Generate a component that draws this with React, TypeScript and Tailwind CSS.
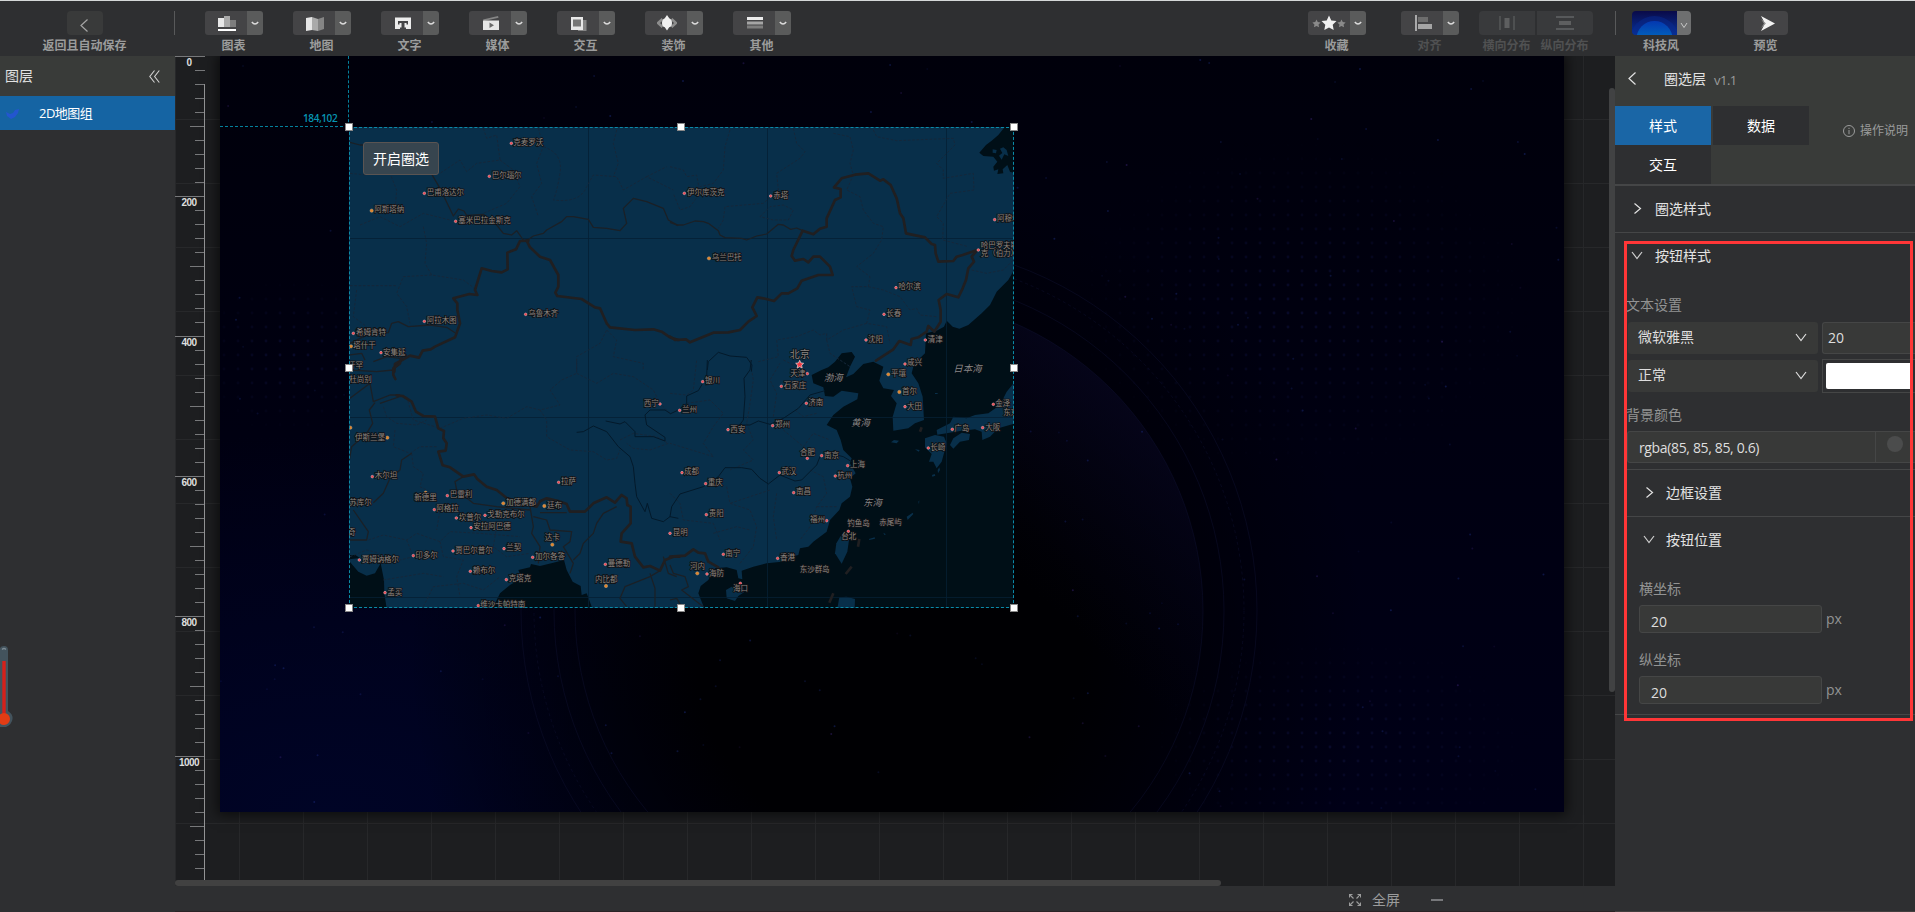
import React from "react";

const SANS = "font-['Open_Sans','Noto_Sans_CJK_SC',sans-serif]";

/* ---------- small glyphs ---------- */

function Chevron({ dir, className = "" }: { dir: "left" | "right" | "down"; className?: string }) {
  const d = { left: "M8.5 0.5 L2 6.5 L8.5 12.5", right: "M1.5 1.5 L7.5 6.5 L1.5 11.5", down: "M1 3 L6 9.5 L11 3" }[dir];
  return (
    <svg width="12" height="13" viewBox="0 0 12 13" className={className}>
      <path d={d} fill="none" stroke="currentColor" strokeWidth="1.2" />
    </svg>
  );
}

const icons: Record<string, React.ReactNode> = {
  chart: (
    <>
      <path d="M1 3h6v9H1z" fill="#e8e8e8" />
      <path d="M7 1h6v11H7z" fill="#a9a9a9" />
      <path d="M13 5h6v7h-6z" fill="#7d7d7d" />
      <path d="M1 14h18v2H1z" fill="#fff" />
    </>
  ),
  map: (
    <>
      <path d="M1 3l6-1v13l-6 1z" fill="#e6e6e6" />
      <path d="M7 2l6 2v12l-6-1z" fill="#aaa" />
      <path d="M13 4l6-2v12l-6 2z" fill="#858585" />
    </>
  ),
  text: (
    <>
      <path d="M2 2.500h16v11.500H2z" fill="#ececec" />
      <path d="M5 6h10v3.500h-1.500V8H11.500v4.500H13V14H7v-1.500h1.500V8H6.500v1.500H5z" fill="#444446" />
    </>
  ),
  media: (
    <>
      <path d="M2 4.500L17 1l.5 1.800L3 6z" fill="#858585" />
      <path d="M2 5.500h16V15H2z" fill="#e6e6e6" />
      <path d="M8.500 7.500l4.500 2.700-4.500 2.800z" fill="#6a6a6a" />
    </>
  ),
  interact: (
    <>
      <path d="M14 5h3.500v11H9v-2z" fill="#858585" />
      <path d="M2 2h12v13H2z" fill="#e8e8e8" />
      <path d="M4 4.500h8v7H4z" fill="#777" />
    </>
  ),
  decor: (
    <>
      <path d="M5.500 4L1 8l4.500 4M14.500 4L19 8l-4.500 4" fill="none" stroke="#8d8d8d" strokeWidth="2.600" />
      <path d="M10 0l2.200 3.200q2.800 1 2.800 4.800t-2.800 4.300L10 15.500l-2.200-3.200Q5 11.800 5 8t2.800-4.800z" fill="#f0f0f0" />
    </>
  ),
  other: (
    <>
      <path d="M2 2h16v3H2z" fill="#ececec" />
      <path d="M2 6.500h16v3H2z" fill="#a5a5a5" />
      <path d="M2 10.500h16v3H2z" fill="#7d7d7d" />
    </>
  ),
};

function Caret() {
  return (
    <svg width="8" height="5" viewBox="0 0 8 5">
      <path d="M.8 1q3.200 4 6.400 0" fill="none" stroke="#dcdcdc" strokeWidth="1.400" />
    </svg>
  );
}

function Caption({ children, dim = false }: { children: React.ReactNode; dim?: boolean }) {
  return (
    <span className={`mt-[3px] -ml-px whitespace-nowrap text-xs leading-[16px] font-bold ${dim ? "text-[#505152]" : "text-[#9b9c9c]"}`}>
      {children}
    </span>
  );
}

function SplitTool({ label, dim, children }: { label: string; dim?: boolean; children: React.ReactNode }) {
  return (
    <div className="flex w-[58px] shrink-0 flex-col items-center">
      <div className="flex h-6 w-full overflow-hidden rounded-[3px]">
        <div className="flex flex-1 items-center justify-center bg-[#444446]">{children}</div>
        <div className="flex w-4 items-center justify-center bg-[#5a5b5b]">
          <Caret />
        </div>
      </div>
      <Caption dim={dim}>{label}</Caption>
    </div>
  );
}

const tools = [
  ["chart", "图表"],
  ["map", "地图"],
  ["text", "文字"],
  ["media", "媒体"],
  ["interact", "交互"],
  ["decor", "装饰"],
  ["other", "其他"],
];

const star = "M0-7.500L2.300-2.600 7.500-2 3.700 1.700 4.700 7 0 4.400-4.700 7-3.700 1.700-7.500-2-2.300-2.600z";

function Header() {
  return (
    <header className="flex h-14 shrink-0 border-t border-[#d5d8d8] bg-[#2e2f31] pt-[10px]">
      <div className="flex w-[174px] shrink-0 flex-col items-center pr-[4px]">
        <div className="flex h-6 w-9 items-center justify-center rounded-[4px] bg-[#393a3a]">
          <Chevron dir="left" className="mt-1 text-[#a5a5a5]" />
        </div>
        <Caption>返回且自动保存</Caption>
      </div>
      <div className="h-6 w-px bg-[#58595a]" />
      <nav className="ml-[30px] flex gap-[30px]">
        {tools.map(([icon, label]) => (
          <SplitTool key={icon} label={label}>
            <svg width="20" height="17" viewBox="0 0 20 17" className="ml-[2px]">
              {icons[icon]}
            </svg>
          </SplitTool>
        ))}
      </nav>
      <div className="ml-auto flex shrink-0 pr-[127px]">
        <SplitTool label="收藏">
          <svg width="34" height="18" viewBox="-17 -9 34 18">
            <path d={star} fill="#f0f0f0" />
            <path d={star} fill="#8a8a8a" transform="translate(-12.500 .5) scale(.55)" />
            <path d={star} fill="#8a8a8a" transform="translate(12.500 .5) scale(.55)" />
          </svg>
        </SplitTool>
        <div className="w-[35px]" />
        <SplitTool label="对齐" dim>
          <svg width="18" height="16" viewBox="0 0 18 16" className="ml-1">
            <path d="M1 0v16" stroke="#eee" strokeWidth="1.200" />
            <path d="M3 2h10v5H3z" fill="#6d6d6d" />
            <path d="M3 9h14v5H3z" fill="#a5a5a5" />
          </svg>
        </SplitTool>
        <div className="ml-5 flex w-14 flex-col items-center">
          <div className="flex h-6 w-full items-center justify-center rounded-l-[4px] bg-[#393a3c]">
            <svg width="18" height="16" viewBox="0 0 18 16">
              <path d="M2 1v14M16 1v14" stroke="#5e5f60" strokeWidth="1.200" />
              <path d="M6.500 3h5v10h-5z" fill="#5e5f60" />
            </svg>
          </div>
          <Caption dim>横向分布</Caption>
        </div>
        <div className="ml-0.5 flex w-14 flex-col items-center">
          <div className="flex h-6 w-full items-center justify-center rounded-r-[4px] bg-[#393a3c]">
            <svg width="18" height="16" viewBox="0 0 18 16">
              <path d="M0 2h18M0 14h18" stroke="#77787a" strokeWidth="1.200" />
              <path d="M3 6h12v4H3z" fill="#5e5f60" />
            </svg>
          </div>
          <Caption dim>纵向分布</Caption>
        </div>
        <div className="ml-[22px] h-6 w-px bg-[#58595a]" />
        <div className="ml-4 flex w-[59px] flex-col items-center">
          <div className="flex h-6 w-full overflow-hidden rounded-[4px]">
            <svg width="45" height="24" viewBox="0 0 45 24">
              <defs>
                <linearGradient id="thumb" x2="0" y2="1">
                  <stop offset="0" stopColor="#0a0a48" />
                  <stop offset="1" stopColor="#07339a" />
                </linearGradient>
                <linearGradient id="globe" x2="0" y2=".7">
                  <stop offset="0" stopColor="#0438b0" />
                  <stop offset="1" stopColor="#0078c0" />
                </linearGradient>
              </defs>
              <path d="M0 0h45v24H0z" fill="url(#thumb)" />
              <circle cx="22.500" cy="30" r="25" fill="#072a90" fillOpacity=".5" />
              <circle cx="22.500" cy="28" r="18" fill="url(#globe)" />
            </svg>
            <div className="flex flex-1 items-center justify-center bg-[#6e6f70]">
              <svg width="8" height="7" viewBox="0 0 8 7" className="mt-1">
                <path d="M1 1l3 4.500L7 1" fill="none" stroke="#c8c8c8" />
              </svg>
            </div>
          </div>
          <Caption>科技风</Caption>
        </div>
        <div className="ml-[53px] flex w-11 flex-col items-center">
          <div className="flex h-6 w-full items-center justify-center rounded-[4px] bg-[#444446]">
            <svg width="14" height="15" viewBox="0 0 14 15" className="ml-1">
              <path d="M0 0l14 7.500L0 15 4 7.500z" fill="#f2f2f2" />
              <path d="M0 3l5 4.500L0 12l3-4.500z" fill="#999" />
            </svg>
          </div>
          <Caption>预览</Caption>
        </div>
      </div>
    </header>
  );
}

/* ---------- layers ---------- */

function LayersPanel() {
  return (
    <aside className="relative w-[175px] shrink-0 bg-[#2e2f31]">
      <div className="flex h-10 items-center justify-between bg-[#393b39] pr-[15px] pl-[5px] text-sm text-[#e2e2e2]">
        图层
        <svg width="11" height="13" viewBox="0 0 11 13">
          <path d="M5.500 .5L.8 6.500l4.700 6M10.300.5L5.600 6.500l4.700 6" fill="none" stroke="#d2d2d2" strokeWidth="1.100" />
        </svg>
      </div>
      <div className="flex h-[34px] items-center bg-[#1564a3] pt-0.5 pl-[6px] text-[13px] tracking-[-0.5px] text-white">
        <svg width="14" height="11" viewBox="0 0 14 11" className="mr-[19px]">
          <path d="M0 3l4 2 3-1 2-3 4-1-1 4-3 4-4 2-4-3z" fill="#2356cf" />
        </svg>
        2D地图组
      </div>
      <svg width="14" height="84" viewBox="0 0 14 84" className="absolute top-[589px] left-0">
        <path d="M0 3Q1 1 4 1q4 0 4 4v61q5 3 4.500 8T6 82H0z" fill="#43535d" />
        <path d="M4 16v55" stroke="#d6201a" strokeWidth="3.400" />
        <circle cx="4" cy="74" r="6" fill="#e23c14" />
        <path d="M2 4.500q2-2 4 0" stroke="#7d8b94" strokeWidth="1.200" fill="none" />
      </svg>
    </aside>
  );
}

/* ---------- map ---------- */

// Map geometry is kept in four tiles, three units to a pixel.
const tiles = {
  nw: "translate(340 110) scale(.33333)",
  ne: "translate(670 110) scale(.33333)",
  sw: "translate(340 360) scale(.33333)",
  se: "translate(670 360) scale(.33333)",
};

type Tile = keyof typeof tiles;
// dot x, dot y, label x, label centre y, name, dot kind (r city, o capital)
type City = [number, number, number, number, string, string];

const cities: Record<Tile, City[]> = {
  nw: [
    [514, 100, 520, 98, "克麦罗沃", "r"],
    [448, 199, 455, 197, "巴尔瑙尔", "r"],
    [253, 250, 260, 247, "巴甫洛达尔", "r"],
    [95, 302, 103, 299, "阿斯塔纳", "o"],
    [347, 334, 355, 331, "塞米巴拉金斯克", "r"],
    [557, 613, 565, 610, "乌鲁木齐", "r"],
    [253, 634, 260, 631, "阿拉木图", "r"],
    [40, 670, 48, 667, "希姆肯特", "r"],
    [33, 709, 40, 707, "塔什干", "o"],
    [123, 728, 129, 726, "安集延", "r"],
    [0, 0, 24, 767, "汗罕", ""],
  ],
  ne: [
    [43, 250, 51, 247, "伊尔库茨克", "r"],
    [302, 258, 310, 255, "赤塔", "r"],
    [117, 445, 125, 442, "乌兰巴托", "o"],
    [974, 329, 981, 326, "阿穆尔", "r"],
    [925, 420, 932, 406, "哈巴罗夫斯", "r"],
    [0, 0, 932, 429, "克（伯力）", ""],
    [678, 533, 685, 530, "哈尔滨", "r"],
    [642, 613, 649, 610, "长春", "r"],
    [588, 690, 594, 688, "沈阳", "r"],
    [766, 690, 773, 688, "清津", "r"],
    [705, 762, 711, 758, "咸兴", "r"],
  ],
  sw: [
    [0, 0, 28, 59, "杜尚别", ""],
    [31, 203, 0, 0, "", "o"],
    [142, 233, 45, 231, "伊斯兰堡", "o"],
    [960, 132, 911, 129, "西宁", "r"],
    [97, 350, 104, 347, "木尔坦", "r"],
    [656, 367, 663, 364, "拉萨", "r"],
    [257, 398, 223, 413, "新德里", "o"],
    [322, 407, 329, 404, "巴雷利", "r"],
    [0, 0, 28, 427, "苏库尔", ""],
    [283, 449, 289, 446, "阿格拉", "r"],
    [490, 430, 498, 428, "加德满都", "o"],
    [613, 438, 621, 436, "廷布", "o"],
    [349, 474, 356, 471, "坎普尔", "r"],
    [435, 466, 442, 463, "戈勒克布尔", "r"],
    [393, 503, 400, 500, "安拉阿巴德", "r"],
    [0, 0, 24, 516, "奇", ""],
    [637, 554, 614, 533, "达卡", "o"],
    [58, 600, 65, 598, "贾姆讷格尔", "r"],
    [220, 587, 226, 585, "印多尔", "r"],
    [339, 573, 346, 570, "贾巴尔普尔", "r"],
    [492, 566, 499, 563, "兰契", "r"],
    [578, 592, 585, 589, "加尔各答", "r"],
    [391, 634, 398, 631, "赖布尔", "r"],
    [796, 613, 803, 610, "曼德勒", "r"],
    [798, 678, 765, 658, "内比都", "o"],
    [499, 659, 506, 656, "克塔克", "r"],
    [135, 698, 142, 696, "孟买", "r"],
    [415, 737, 421, 733, "维沙卡帕特南", "r"],
    [990, 520, 998, 517, "昆明", "r"],
  ],
  se: [
    [412, 41, 361, 39, "天津", "r"],
    [98, 65, 105, 62, "银川", "r"],
    [334, 79, 341, 77, "石家庄", "r"],
    [409, 130, 415, 127, "济南", "r"],
    [29, 151, 36, 148, "兰州", "r"],
    [174, 209, 181, 207, "西安", "r"],
    [308, 197, 315, 194, "郑州", "r"],
    [655, 43, 663, 41, "平壤", "o"],
    [688, 96, 696, 94, "首尔", "o"],
    [705, 140, 711, 138, "大田", "r"],
    [970, 133, 976, 131, "金泽", "r"],
    [0, 0, 1000, 158, "东京", ""],
    [847, 208, 853, 204, "广岛", "r"],
    [938, 203, 946, 201, "大阪", "r"],
    [775, 264, 781, 262, "长崎", "r"],
    [412, 295, 390, 276, "合肥", "r"],
    [455, 287, 462, 285, "南京", "r"],
    [533, 317, 540, 314, "上海", "r"],
    [496, 348, 502, 346, "杭州", "r"],
    [36, 338, 42, 335, "成都", "r"],
    [107, 371, 113, 368, "重庆", "r"],
    [328, 338, 334, 335, "武汉", "r"],
    [371, 398, 378, 395, "南昌", "r"],
    [109, 464, 116, 461, "贵阳", "r"],
    [470, 482, 420, 479, "福州", "r"],
    [0, 0, 532, 490, "钓鱼岛", ""],
    [0, 0, 628, 486, "赤尾屿", ""],
    [535, 514, 514, 528, "台北", "r"],
    [160, 583, 166, 580, "南宁", "r"],
    [323, 595, 330, 593, "香港", "r"],
    [82, 640, 60, 619, "河内", "o"],
    [111, 642, 117, 639, "海防", "r"],
    [211, 670, 189, 684, "海口", "r"],
    [0, 0, 389, 627, "东沙群岛", ""],
  ],
};

const seas: [number, number, string][] = [
  [461, 53, "渤海"],
  [543, 187, "黄海"],
  [579, 427, "东海"],
  [850, 27, "日本海"],
];

function CityLabels({ tile }: { tile: Tile }) {
  return (
    <g transform={tiles[tile]}>
      {cities[tile].map(([x, y, lx, ly, name, kind], i) => (
        <g key={i}>
          {kind === "r" && <circle cx={x} cy={y} r="4" fill="#f04450" stroke="#e6b4b8" strokeWidth="1.600" />}
          {kind === "o" && <circle cx={x} cy={y} r="5" fill="#e58528" stroke="#b9a284" strokeWidth="1.500" />}
          {name && (
            <text x={lx} y={ly + 8} fontSize="22.500" fill="#8b847f" stroke="#101216" strokeWidth="5" paintOrder="stroke">
              {name}
            </text>
          )}
        </g>
      ))}
    </g>
  );
}

function MapView() {
  return (
    <svg width="665" height="481" viewBox="349 127 665 481" className="block bg-[#082f4a]">
      {/* sea */}
      <g transform={tiles.se} fill="#000f17">
        <path d="M1035-275L1015-240 980-205 960-165 935-140 895-105 868-94 848-100 840-108 830-118 822-100 800-88 768-80 765-20 732 12 725 40 745 70 758 110 762 180 735 190 715 205 670 212 668 170 680 130 663 108 672 90 640 85 628 62 640 20 610 5 580 12 550 42 528 52 540 20 555-10 545-24 515-20 495 5 475 22 455 30 425 45 430 70 460 82 465 108 490 110 515 92 565 100 562 118 520 140 490 165 470 195 500 210 512 240 520 270 545 295 540 310 557 340 540 355 547 380 540 410 515 430 508 450 480 480 470 515 430 545 415 560 390 565 385 585 345 595 335 605 290 610 250 620 215 632 217 658 205 655 200 630 170 622 135 625 115 660 92 678 85 700 103 745H1035z" />
        <g fill="#082f4a">
          <path d="M1035 65L1010 95 990 135 955 160 915 165 890 175 850 170 840 190 800 210 802 224 830 220 870 213 915 208 935 215 937 240 960 230 985 205 1035 190z" />
          <path d="M850 235L875 218 900 222 897 240 870 245 850 266 840 255z" />
          <path d="M765 235L795 225 822 230 830 250 815 305 800 325 790 305 777 305 785 282 765 262z" />
          <path d="M512 528L537 540 532 575 515 611 495 580 499 550z" />
          <path d="M168 690L185 680 220 683 222 697 205 708 195 723 170 715z" />
          <path d="M508 712L530 710 555 717 554 745H502z" />
          <path d="M663 247L672 240 687 242 680 250zM786 345l8-3 2 5-9 3zM803 330l5-8 2 8-6 10zM745 425l3-4-1 12zM710 470l18-12 2 4-17 18zM597 537l17-5 1 4-17 4zM640 518l8 5-5 2zM735 268l14 2-3 5zM795 99h8v3h-8z" />
        </g>
      </g>
      <g transform={tiles.ne} fill="#000f17">
        <path d="M1005 50L985 75 965 92 948 105 928 128 940 138 970 140 982 155 970 170 972 182 985 178 982 192 1000 190 998 178 1012 165 1020 185 1035 190V50z" />
        <path d="M968 118l12 2-2 10-10-2zM990 116l10-4 10 8 5 18-12-5-8 16-8-12 10-8z" fill="#082f4a" />
      </g>
      <g transform={tiles.sw} fill="#000f17">
        <path d="M25 600L35 612 55 635 80 647 105 640 122 610 132 660 133 700 140 745H25zM28 585h18l14 9-32 4z" />
        <path d="M458 745L480 700 510 675 545 655 535 630 570 622 573 612 600 618 640 608 672 600 680 630 698 665 722 678 725 705 740 700 757 745z" />
      </g>

      {/* graticule */}
      <path
        d="M349 238.500h665M349 417.500h665M349 597.500h665M588.500 127v481M767.500 127v481M946.500 127v481"
        stroke="#051f33"
        strokeWidth="1"
        strokeOpacity=".8"
      />

      {/* province and district boundaries */}
      <g fill="none" stroke="#15273a" strokeWidth="3" strokeDasharray="8 5">
        <g transform={tiles.nw}>
          <path d="M430 55L440 85 470 75 480 150 410 160 380 185 360 150 300 190 M480 150L520 180 540 230 500 280 430 310 M595 55L610 110 590 160 605 220 575 260 595 320 M610 110Q670 130 660 190T640 270Q720 280 740 230L760 195 830 200 850 240 920 200 1000 240 M920 200L980 170 M830 60L820 100 835 160 820 200" />
          <path d="M30 190L80 195 110 160 150 190 170 240 165 300 M60 345L120 320 180 350 250 310 330 330 M250 350L260 400 255 460 275 495 370 510 410 540 M275 495L190 500 170 550 200 590 210 640 M30 527H170 M50 540L40 620 80 650 M710 780L710 740 780 700 800 660 M800 660L830 690 820 740 910 760 910 780" />
        </g>
        <g transform={tiles.ne}>
          <path d="M180 60L165 110 160 180 130 220 90 230 M0 170L40 180 50 200 80 195 90 250 60 290 30 300 10 250 M370 55L380 100 405 125 390 145 320 190 325 240 280 280 165 290 160 330 145 355 M270 320L300 290 340 285 370 300 355 330 310 330 270 320" />
          <path d="M490 70L540 80 550 120 540 160 550 195 530 240 570 260 580 300 610 340 640 350 635 390 610 430 560 470 600 500 595 530 545 530 560 590 600 600 590 640 650 650 660 700 M595 530L640 540 690 560 720 600 740 595 750 615 800 620 M610 60L620 80 680 92 850 85 855 105 800 160 820 180 820 205 910 190 912 240 840 250 800 320 820 340 818 390 895 410 M905 480L950 490 1000 480 1030 450 M590 640L520 660 470 690 470 670 450 675 430 660 380 680 320 690 325 740 265 755 M470 690L480 730 540 770" />
        </g>
        <g transform={tiles.sw}>
          <path d="M200 110L220 180 300 205 370 175 440 165 500 175 560 140 600 150 660 135 630 90 665 60 710 40 710 0 M710 40L770 70 820 40 880 50 940 90 960 130 990 160 M600 150L620 180 620 230 690 270 760 275 800 300 830 295 840 270 M840 240L880 220 950 230 985 250 930 270 880 265 860 250" />
          <path d="M130 140L140 170 170 190 230 195 260 180 M165 210L160 260 210 280 240 260 290 260 M215 280L220 320 250 340 240 380 280 400 300 450 290 510 M85 540L130 525 200 540 230 520 300 545 330 515 420 520 540 530 M200 540L220 590 180 600 M300 545L310 590 370 600 350 650 360 710 M250 740L280 680 370 670 430 690 480 650 M470 500L460 560 500 590 570 580 M30 590L80 570 120 580 M130 660L250 640 310 650" />
        </g>
        <g transform={tiles.se}>
          <path d="M0 100L50 105 70 90 80 0 M50 130L120 120 160 160 130 200 100 250 130 290 0 250 M240 0L250 60 240 130 230 190 M310 170L320 100 300 60 330 10 M230 190L250 240 220 270 250 300 180 330 M340 0L380 20 400 0 M375 150L400 170 440 160 M340 210L400 260 430 220 480 240 M420 330L460 350 470 400 440 440 420 500 390 540 M440 440L500 440 M320 400L310 470 320 540 M0 400L30 430 40 480 130 490 150 540 M170 380L180 430 240 410 300 390 M180 430L240 450 260 500 250 560 210 610 M130 520L200 500 240 510" />
        </g>
      </g>

      {/* rivers and secondary borders */}
      <g fill="none" stroke="#1b2026" strokeWidth="3.800" strokeLinejoin="round">
        <g transform={tiles.nw}>
          <path d="M30 97L60 105 85 105 M265 175L300 235 340 318 355 297 372 303 380 316 430 313 470 345 490 370 515 375 530 362 550 390 M560 392L580 378 610 370 620 360 665 335 680 320 700 320 745 328 760 352 800 355 840 362 860 340 850 295 880 265 920 275 970 295 985 330 1015 347" />
          <path d="M30 700L90 670 145 668 155 640 175 635 205 650 270 645 320 652 345 668 M30 735L65 730 75 750 M100 755L140 740 180 745 200 735" />
        </g>
        <g transform={tiles.ne}>
          <path d="M0 337L20 345 40 345 75 333 100 335 115 340 145 362 150 375 165 383 215 385 230 390 260 378 290 372 325 343 340 345 362 358 380 354 398 362" />
        </g>
        <g transform={tiles.sw}>
          <path d="M30 30L110 35 160 30 M30 115L90 70 100 125 150 105 180 105 M105 128L88 150 98 190 80 220 35 260 28 300 M185 108L120 130 M215 280L185 300 180 330 150 355 130 400 100 428 M370 350L345 365 350 390 400 430 470 440 570 450 M570 440L580 500 575 520 600 560 595 610 M580 470L620 480 630 510 695 515 690 545 670 560 700 610 690 640 M830 440L790 460 770 490 760 520 730 550 720 580 700 600 M40 450L85 515 80 540 30 540 M960 632L930 650 855 680 840 715 860 740 M930 640L945 685 945 740 M600 458L680 458 M970 590L985 640 1010 650" />
        </g>
        <g transform={tiles.se}>
          <path d="M0 615L10 640 45 650 55 680 35 690 100 740 M0 720L20 715 35 740" />
        </g>
      </g>
      <g fill="none" stroke="#03192a" strokeWidth="3" strokeLinejoin="round">
        <g transform={tiles.sw}>
          <path d="M710 217L730 215 760 198 800 215 835 260 870 290 880 320 885 370 890 410 915 455 922 430 935 475 970 485 990 470 1015 475 M797 183L840 192 855 185 885 215 885 230 940 230 975 243 975 232 920 195 915 165 930 150 975 150 990 160" />
        </g>
        <g transform={tiles.ne}>
          <path d="M112 780L115 755 145 727 180 738 230 742 246 765 244 785" />
        </g>
        <g transform={tiles.se}>
          <path d="M112 0L110 50 85 92 50 108 50 130 25 150 0 162 M244 0L240 30 222 55 225 110 220 180 205 200 M205 195L240 195 265 183 300 193 340 175 385 145 420 105 465 92 M0 470L5 440 30 402 100 380 145 350 165 323 215 323 245 328 270 355 295 372 330 345 375 363 395 360 440 315 450 290 480 280 520 290 545 305" />
        </g>
      </g>

      {/* national borders */}
      <g fill="none" stroke="#201f21" strokeWidth="8" strokeLinejoin="round" strokeLinecap="round">
        <g transform={tiles.nw}>
          <path d="M565 392L540 393 528 418 502 428 503 478 485 487 455 483 425 475 405 540 412 555 388 552 340 565 352 580 352 600 360 640 345 682 285 710 272 718 248 722 237 743 210 737 165 762 163 785" />
          <path d="M560 392L570 412 600 440 630 450 655 495 655 530 646 548 652 558 725 567 765 592 780 595 800 640 810 652 885 660 940 658 965 665 990 682 1015 690" />
        </g>
        <g transform={tiles.ne}>
          <path d="M0 680L15 690 48 688 60 697 130 668 175 667 210 660 235 635 260 618 247 592 262 562 280 565 312 573 335 550 355 550 382 535 395 512 445 495 488 495 480 470 450 440 430 440 415 457 400 447 375 452 365 438 370 420 398 362 430 373 450 356 470 350 470 325 495 270 512 262 512 237 492 232 515 205 555 194 595 190 630 212 640 208 662 225 680 265 690 310 700 325 708 370 740 377 765 382 785 402 795 405 797 430 805 455 850 453 860 440 878 435 922 420 905 440 912 455 895 475 888 510 878 535 865 562 830 552 806 570 812 600 812 635 793 665 775 648 770 665 745 682 725 687 722 705 688 693 670 718 618 752" />
        </g>
        <g transform={tiles.sw}>
          <path d="M183-5L180 10 160 25 160 45 166 57M170 106L188 108 215 125 228 155 250 168 285 170 295 205 312 213 310 235 320 250 317 272 295 275 308 316 330 322 370 350 402 343 412 357 440 380 470 390 500 414 590 440 600 424 620 415 655 423 680 432 690 455 735 455 760 430 800 412 825 428 845 405 860 415 862 435 872 440 872 490 845 520 842 545 875 550 885 590 910 622 930 618 960 632 975 600 1000 590 1018 590" />
        </g>
        <g transform={tiles.se}>
          <path d="M0 590L45 587 70 568 85 578 105 580 115 605 145 622" />
          <path d="M568 537L564 560M545 620L527 642M490 700L478 728M755 202L750 215" strokeLinecap="butt" />
        </g>
      </g>

      <g fontFamily="'Noto Sans CJK SC', sans-serif">
        <CityLabels tile="nw" />
        <CityLabels tile="ne" />
        <CityLabels tile="sw" />
        <CityLabels tile="se" />
        <g transform={tiles.se}>
          {seas.map(([x, y, name]) => (
            <text key={name} x={x} y={y + 10} fontSize="28.500" fontStyle="italic" fill="#85878a" stroke="#05090d" strokeWidth="3" paintOrder="stroke">
              {name}
            </text>
          ))}
          <text x="359" y="-7" fontSize="30" fill="#8a8683" stroke="#0b0f13" strokeWidth="4" paintOrder="stroke">
            北京
          </text>
          <path d={star} fill="#f23a44" stroke="#f4dede" strokeWidth="1.300" transform="translate(389 13) scale(1.600)" />
        </g>
      </g>
    </svg>
  );
}

/* ---------- stage ---------- */

const stars = Array.from({ length: 230 }, (_, i) => ({
  x: (i * 397.31 + ((i * i * 17) % 211)) % 1344,
  y: (i * 173.77 + ((i * i * 29) % 157)) % 756,
  o: 0.15 + ((i * 7) % 10) / 26,
  c: i % 4 === 0 ? "#3a2478" : "#1b2a78",
}));

function Artboard() {
  return (
    <svg width="1344" height="756" viewBox="0 0 1344 756" className="block">
      <defs>
        <linearGradient id="space" x1="0" y1="0" x2="0" y2="1">
          <stop offset="0" stopColor="#00000b" />
          <stop offset="1" stopColor="#000017" />
        </linearGradient>
        <radialGradient id="corner" cx=".08" cy="1" r=".5">
          <stop offset="0" stopColor="#000426" />
          <stop offset="1" stopColor="#000426" stopOpacity="0" />
        </radialGradient>
        <radialGradient id="hole">
          <stop offset=".4" stopColor="#000003" />
          <stop offset="1" stopColor="#000003" stopOpacity="0" />
        </radialGradient>
        <linearGradient id="rim" x1=".45" y1=".6" x2="1" y2="0">
          <stop offset=".35" stopColor="#05051a" stopOpacity="0" />
          <stop offset="1" stopColor="#0b0928" />
        </linearGradient>
        <pattern id="dots" width="14" height="14" patternUnits="userSpaceOnUse">
          <circle cx="4" cy="5" r="1.400" fill="#080a2c" />
        </pattern>
        <radialGradient id="fade">
          <stop offset="0" stopColor="#fff" />
          <stop offset="1" stopColor="#000" />
        </radialGradient>
        <mask id="patches">
          <ellipse cx="1080" cy="250" rx="230" ry="170" fill="url(#fade)" />
          <ellipse cx="1120" cy="690" rx="190" ry="110" fill="url(#fade)" />
          <ellipse cx="70" cy="300" rx="100" ry="80" fill="url(#fade)" />
        </mask>
      </defs>
      <path d="M0 0h1344v756H0z" fill="url(#space)" />
      <path d="M0 0h1344v756H0z" fill="url(#corner)" />
      <ellipse cx="669" cy="600" rx="480" ry="480" fill="url(#hole)" />
      <path d="M0 0h1344v756H0z" fill="url(#dots)" mask="url(#patches)" />
      <circle cx="669" cy="555" r="314" fill="url(#rim)" />
      <g fill="none" stroke="#0d0f2c" strokeOpacity=".55">
        <circle cx="669" cy="555" r="314" />
        <circle cx="669" cy="555" r="335" />
        <circle cx="669" cy="555" r="355" strokeDasharray="3 3" />
        <circle cx="669" cy="555" r="368" />
      </g>
      {stars.map((s, i) => (
        <circle key={i} cx={s.x} cy={s.y} r="1" fill={s.c} opacity={s.o} />
      ))}
    </svg>
  );
}

const ticks = Array.from({ length: 60 }, (_, i) => i);

function Ruler() {
  return (
    <div className="relative h-[824px] w-[30px] overflow-hidden">
      {ticks.map((i) => (
        <div key={i} className="flex h-[14px] flex-col items-end">
          <div
            className={`h-px shrink-0 bg-[#77787a] ${i % 10 === 0 ? "w-[30px]" : i % 5 === 0 ? "w-[15px]" : "w-[10px]"}`}
          />
          {i % 10 === 0 && (
            <span className="w-[30px] pr-[2px] text-center font-['Liberation_Sans',sans-serif] text-[10px] leading-[11px] font-bold tracking-[-0.6px] text-[#dedede]">
              {i * 20}
            </span>
          )}
        </div>
      ))}
      <div className="absolute top-7 right-0 bottom-0 w-px bg-[#929394]" />
    </div>
  );
}

const handles = [
  "left-[-4px] top-[-4px]",
  "left-[328px] top-[-4px]",
  "left-[661px] top-[-4px]",
  "left-[-4px] top-[237px]",
  "left-[661px] top-[237px]",
  "left-[-4px] top-[477px]",
  "left-[328px] top-[477px]",
  "left-[661px] top-[477px]",
];

function Stage() {
  return (
    <main className="flex w-[1440px] shrink-0 flex-col">
      <div className="relative h-[830px] overflow-hidden bg-[#1d1e20] bg-[linear-gradient(to_right,#27282a_1px,transparent_1px),linear-gradient(to_bottom,#27282a_1px,transparent_1px)] bg-[size:64px_64px] bg-[position:0_-1px]">
        <Ruler />
        <div className="absolute top-0 left-[45px] shadow-[0_0_12px_3px_rgba(0,0,0,0.6)]">
          <Artboard />
          <div className="absolute top-0 left-32 h-[71px] border-l border-dashed border-[#04809c]" />
          <div className="absolute top-[70px] left-0 w-32 border-t border-dashed border-[#04809c]" />
          <span className="absolute top-[55px] left-[83px] text-[10px] leading-[14px] font-semibold tracking-[-0.4px] text-[#0795b3]">184,102</span>
          <div className="absolute top-[71px] left-[129px]">
            <MapView />
            <div className="absolute inset-0 border border-dashed border-[#0b8aa8]" />
            <div className="absolute top-[15px] left-[14px] flex h-[33px] w-[76px] items-center justify-center rounded-[3px] border border-[#5a5452] bg-[#37454f] text-sm text-white">
              开启圈选
            </div>
            {handles.map((p) => (
              <div key={p} className={`absolute h-2 w-2 border border-[#888] bg-white ${p}`} />
            ))}
          </div>
        </div>
        <div className="absolute top-8 right-0 h-[604px] w-[6px] rounded-[3px] bg-[#414243]" />
        <div className="absolute bottom-0 left-0 h-[6px] w-[1046px] rounded-[3px] bg-[#414141]" />
      </div>
      <div className="flex h-[26px] items-center border-b border-[#2a2325] bg-[#2e2f31] pt-[3px] pl-[1174px] text-sm text-[#9b9c9c]">
        <svg width="12" height="12" viewBox="0 0 12 12" className="mr-[11px]" fill="none" stroke="#9b9c9c" strokeWidth="1.100">
          <path d="M.5 3.500v-3h3M8.500.5h3v3M.5 8.500v3h3M11.500 8.500v3h-3M.5.5L4.500 4.500M11.500.5l-4 4M.5 11.500l4-4M11.500 11.500l-4-4" />
        </svg>
        全屏
        <div className="ml-[31px] h-[2px] w-3 bg-[#77787b]" />
      </div>
    </main>
  );
}

/* ---------- properties ---------- */

function Select({ children }: { children: React.ReactNode }) {
  return (
    <div className="flex h-8 w-[190px] shrink-0 items-center justify-between rounded-[3px] bg-[#383938] pr-[11px] pb-0.5 pl-[10px] text-sm text-[#dedede]">
      {children}
      <Chevron dir="down" />
    </div>
  );
}

function PxField({ label, className }: { label: string; className: string }) {
  return (
    <div className={`pl-3 ${className}`}>
      <div className="h-[26px] text-sm leading-5 text-[#929393]">{label}</div>
      <div className="flex items-center gap-1">
        <div className="flex h-7 w-[183px] items-center rounded-[3px] border border-[#454646] bg-[#383938] pt-[5px] pl-[11px] text-sm text-[#dedede]">
          20
        </div>
        <span className="text-sm leading-5 text-[#929393]">px</span>
      </div>
    </div>
  );
}

function Properties() {
  return (
    <aside className="relative flex w-[300px] shrink-0 flex-col overflow-hidden border-b border-[#433e3e] bg-[#2e2f31] text-sm text-[#e2e2e2]">
      <div className="h-[130px] shrink-0 border-b-2 border-[#454647] bg-[#393b39]">
        <div className="flex h-[50px] items-center pb-[5px] pl-3">
          <Chevron dir="left" className="mr-[25px]" />
          圈选层
          <span className="mt-1 ml-2 text-[13px] tracking-[-0.5px] text-[#9b9c9c]">v1.1</span>
        </div>
        <div className="flex">
          <div className="flex w-[194px] flex-wrap gap-x-[2px]">
            <div className="flex h-[39px] w-24 items-center justify-center bg-[#1a66a6] text-white">样式</div>
            <div className="flex h-[39px] w-24 items-center justify-center bg-[#2e2f31] text-white">数据</div>
            <div className="flex h-[39px] w-24 items-center justify-center bg-[#2e2f31] text-white">交互</div>
          </div>
          <div className="flex h-[39px] items-center gap-[5px] pt-[10px] pl-[34px] text-xs whitespace-nowrap text-[#9b9c9c]">
            <svg width="12" height="12" viewBox="0 0 12 12" fill="none" stroke="#9b9c9c">
              <circle cx="6" cy="6" r="5.500" />
              <path d="M6 5v4.200M6 2.800v1.200" />
            </svg>
            操作说明
          </div>
        </div>
      </div>

      <div className="flex h-[47px] shrink-0 items-center gap-[10px] border-b border-[#454647] pb-px pl-[18px]">
        <Chevron dir="right" />
        圈选样式
      </div>

      <section className="h-[482px] shrink-0 border-b border-[#454647] pl-3">
        <div className="flex h-[47px] items-center gap-3 pb-0.5 pl-1">
          <Chevron dir="down" className="text-[#cfcfcf]" />
          按钮样式
        </div>
        <div className="mt-[15px] -ml-px h-[27px] text-sm leading-5 text-[#929393]">文本设置</div>
        <div className="flex gap-1 pl-px">
          <Select>微软雅黑</Select>
          <div className="flex h-8 flex-1 items-center rounded-l-[3px] border border-r-0 border-[#454646] bg-[#383938] pl-[5px] text-[#dedede]">20</div>
        </div>
        <div className="mt-[5px] flex items-center gap-1 pl-px">
          <Select>正常</Select>
          <div className="h-[34px] flex-1 border border-r-0 border-[#454646] py-[3px] pr-[5px] pl-[3px]">
            <div className="h-full rounded-l-[2px] bg-white" />
          </div>
        </div>
        <div className="mt-[11px] -ml-px h-[27px] pt-px text-sm leading-5 text-[#929393]">背景颜色</div>
        <div className="flex h-8 rounded-l-[3px] border border-r-0 border-[#454646] bg-[#383938]">
          <div className="w-[248px] border-r border-[#454646] pt-[6px] pl-[11px] leading-5 tracking-[-0.35px] text-[#dedede]">rgba(85, 85, 85, 0.6)</div>
          <div className="mt-1 ml-[11px] h-4 w-4 rounded-full bg-[#4b4c4c]" />
        </div>
        <div className="mt-[6px] flex h-[48px] items-center gap-2 border-t border-b border-[#454647] pb-px pl-[18px]">
          <Chevron dir="right" />
          <span className="ml-px">边框设置</span>
        </div>
        <div className="flex h-[47px] items-center gap-[10px] pb-0.5 pl-4">
          <Chevron dir="down" className="text-[#cfcfcf]" />
          <span className="ml-px">按钮位置</span>
        </div>
        <PxField label="横坐标" className="mt-[15px]" />
        <PxField label="纵坐标" className="mt-[17px]" />
      </section>

      <div className="absolute top-[185px] left-[9px] h-[480px] w-[289px] border-[3px] border-[#ff3637]" />
    </aside>
  );
}

export default function App() {
  return (
    <div className={`flex h-[912px] w-[1915px] flex-col overflow-hidden bg-[#2e2f31] ${SANS}`}>
      <Header />
      <div className="flex min-h-0 flex-1">
        <LayersPanel />
        <Stage />
        <Properties />
      </div>
    </div>
  );
}
